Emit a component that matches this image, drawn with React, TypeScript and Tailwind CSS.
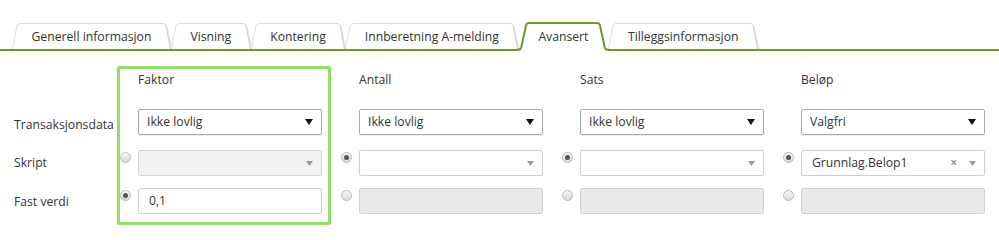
import type { ReactNode } from "react";

const tabs = [
  "Generell informasjon",
  "Visning",
  "Kontering",
  "Innberetning A-melding",
  "Avansert",
  "Tilleggsinformasjon",
];

function TabEdge({ active, right }: { active?: boolean; right?: boolean }) {
  if (active) {
    return (
      <svg
        width="11"
        height="29"
        className={`shrink-0 overflow-visible ${right ? "-scale-x-100" : ""}`}
      >
        <path d="M0 29 L0 28 Q2.5 28 3.2 25.5 L8.2 2.8 Q8.8 1 11 1 L11 29 Z" fill="#fff" />
        <path
          d="M-1 28 Q2.5 28 3.2 25.5 L8.2 2.8 Q8.8 1 11.5 1"
          fill="none"
          stroke="#6a9a23"
          strokeWidth="2"
        />
      </svg>
    );
  }
  return (
    <svg
      width="8"
      height="26"
      className={`shrink-0 overflow-visible ${right ? "-scale-x-100" : ""}`}
    >
      <path d="M0 26 L5 2.5 Q5.6 0.5 8 0.5 L8 26 Z" fill="#fff" />
      {right && (
        <path d="M-0.8 26 L4.2 4" fill="none" stroke="#e4e4e4" strokeWidth="1.5" />
      )}
      <path
        d="M0.4 26 L5 2.5 Q5.6 0.5 8.5 0.5"
        fill="none"
        stroke={right ? "#cfcfcf" : "#dedede"}
        strokeWidth="1"
      />
    </svg>
  );
}

function Tab({ label, active }: { label: string; active?: boolean }) {
  if (active) {
    return (
      <div className="relative z-10 -mb-[2px] flex h-[29px]">
        <TabEdge active />
        <div className="border-t-2 border-[#6a9a23] bg-white px-[9px] pt-[4px] leading-[18px]">
          {label}
        </div>
        <TabEdge active right />
      </div>
    );
  }
  return (
    <div className="flex h-[26px]">
      <TabEdge />
      <div className="border-t border-[#dedede] bg-white px-[11.5px] pt-[4px] leading-[18px]">
        {label}
      </div>
      <TabEdge right />
    </div>
  );
}

function Radio({ checked }: { checked?: boolean }) {
  return (
    <span className="mt-[2px] flex h-[11px] w-[11px] shrink-0 items-center justify-center rounded-full border border-[#b9b9b9] bg-linear-to-b from-[#f8f8f8] to-[#d9d9d9]">
      {checked && <span className="h-[5px] w-[5px] rounded-full bg-[#555]" />}
    </span>
  );
}

function BoldArrow() {
  return (
    <svg width="8" height="6" className="shrink-0">
      <polygon points="0,0 8,0 4,6" fill="#111" />
    </svg>
  );
}

function LightArrow() {
  return (
    <svg width="7" height="5" className="shrink-0">
      <polygon points="0,0 7,0 3.5,5" fill="#9a9a9a" />
    </svg>
  );
}

function TypeSelect({ value }: { value: string }) {
  return (
    <div className="flex h-[26px] w-[184px] items-center justify-between rounded-[2px] border border-[#a9a9a9] bg-white pl-[8px] pr-[8px] shadow-[0_1px_1px_rgba(0,0,0,0.08)]">
      <span>{value}</span>
      <BoldArrow />
    </div>
  );
}

function ScriptSelect({ disabled, value }: { disabled?: boolean; value?: string }) {
  return (
    <div
      className={`flex h-[26px] w-[184px] items-center rounded-[2px] border pl-[10px] pr-[8px] ${
        disabled ? "border-[#d6d6d6] bg-[#f1f1f1]" : "border-[#cfcfcf] bg-white"
      }`}
    >
      <span className="flex-1">{value}</span>
      {value && <span className="mr-[12px] text-[12px] font-bold leading-none text-[#9a9a9a]">×</span>}
      <LightArrow />
    </div>
  );
}

function ValueInput({ value }: { value?: string }) {
  return (
    <div
      className={`flex h-[26px] w-[184px] items-center rounded-[2px] border pl-[10px] ${
        value !== undefined ? "border-[#cfcfcf] bg-white" : "border-[#d2d2d2] bg-[#e9e9e9]"
      }`}
    >
      {value}
    </div>
  );
}

function Column({
  title,
  highlight,
  children,
}: {
  title: string;
  highlight?: boolean;
  children: ReactNode;
}) {
  return (
    <div
      className={`flex w-[214px] flex-col border-[3px] pb-[8px] ${
        highlight ? "rounded-[2px] border-[#95dd69]" : "border-transparent"
      }`}
    >
      <div className="h-[40px] pl-[18px] pt-[2px] leading-[18px]">{title}</div>
      {children}
    </div>
  );
}

const columns = [
  { title: "Faktor", type: "Ikke lovlig", script: "fixed", highlight: true },
  { title: "Antall", type: "Ikke lovlig", script: "script" },
  { title: "Sats", type: "Ikke lovlig", script: "script" },
  { title: "Beløp", type: "Valgfri", script: "script", scriptValue: "Grunnlag.Belop1" },
];

export default function App() {
  return (
    <div className="h-[229px] w-[999px] overflow-hidden bg-white font-['Open_Sans',sans-serif] text-[12.2px] text-[#333]">
      {/* Tabs */}
      <div className="flex items-end border-b-2 border-[#6a9a23] pl-[12px] pt-[22px]">
        {tabs.map((t) => (
          <Tab key={t} label={t} active={t === "Avansert"} />
        ))}
      </div>

      {/* Form grid */}
      <div className="mt-[15px] flex gap-[7px]">
        <div className="flex w-[110px] flex-col pl-[14px] pt-[43px]">
          <div className="h-[26px] pt-[7px] leading-[18px]">Transaksjonsdata</div>
          <div className="mt-[15px] flex h-[26px] items-center">Skript</div>
          <div className="mt-[12px] flex h-[26px] items-center pt-[2px]">Fast verdi</div>
        </div>

        {columns.map((c) => (
          <Column key={c.title} title={c.title} highlight={c.highlight}>
            <div className="pl-[18px]">
              <TypeSelect value={c.type} />
            </div>
            <div className="mt-[15px] flex gap-[7px]">
              <Radio checked={c.script === "script"} />
              <ScriptSelect disabled={c.script !== "script"} value={c.scriptValue} />
            </div>
            <div className="mt-[12px] flex gap-[7px]">
              <Radio checked={c.script === "fixed"} />
              <ValueInput value={c.script === "fixed" ? "0,1" : undefined} />
            </div>
          </Column>
        ))}
      </div>
    </div>
  );
}
